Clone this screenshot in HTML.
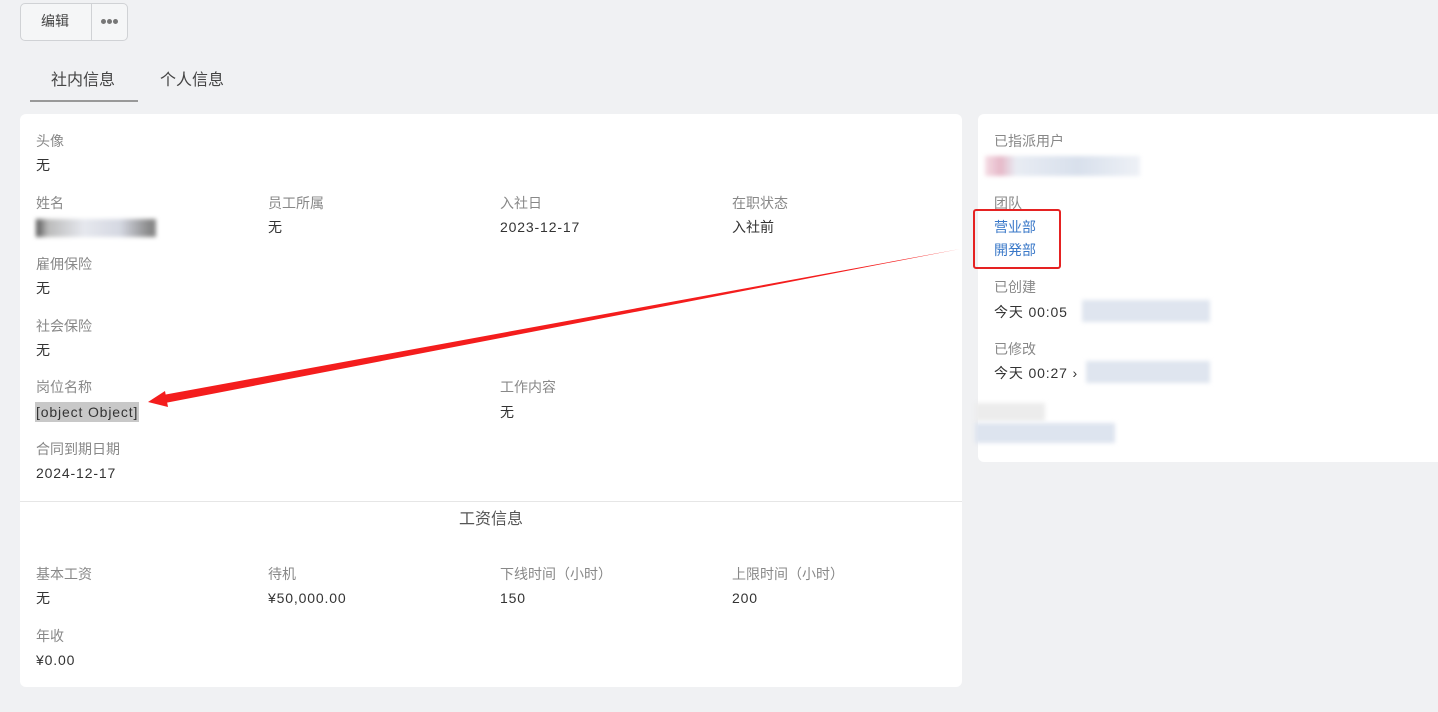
<!DOCTYPE html>
<html><head><meta charset="utf-8"><style>
*{margin:0;padding:0;box-sizing:border-box}
body{width:1438px;height:712px;background:#f0f1f3;font-family:"Liberation Sans","Noto Sans CJK SC",sans-serif;font-size:14px;color:#333;position:relative;overflow:hidden}
.abs{position:absolute}
.lb{position:absolute;color:#888;font-size:14px;line-height:20px;white-space:nowrap}
.v{position:absolute;color:#333;font-size:14px;line-height:20px;white-space:nowrap}
.l{letter-spacing:.85px}
.card{position:absolute;background:#fff;border-radius:6px}
.blur{position:absolute;filter:blur(2px)}
.dot{position:absolute;width:5px;height:5px;border-radius:50%;background:#777;top:19px}
</style></head><body>
<div class="abs" style="left:20px;top:3px;width:108px;height:38px;border:1px solid #d0d2d5;border-radius:5px;background:#f5f6f7"></div>
<div class="abs" style="left:91px;top:4px;width:1px;height:36px;background:#d0d2d5"></div>
<div class="v" style="left:41px;top:11px;color:#444">编辑</div>
<div class="dot" style="left:101px"></div><div class="dot" style="left:107px"></div><div class="dot" style="left:113px"></div>
<div class="v" style="left:51px;top:70px;font-size:16px;line-height:22px;color:#444">社内信息</div>
<div class="v" style="left:160px;top:70px;font-size:16px;line-height:22px;color:#444">个人信息</div>
<div class="abs" style="left:30px;top:100px;width:108px;height:2px;background:#999"></div>

<div class="card" style="left:20px;top:114px;width:942px;height:573px"></div>
<div class="lb" style="left:36px;top:131px">头像</div><div class="v" style="left:36px;top:155px">无</div>
<div class="lb" style="left:36px;top:193px">姓名</div>
<div class="blur" style="left:36px;top:219px;width:120px;height:18px;background:linear-gradient(90deg,#555 0,#bbb 10%,#e6e8ee 40%,#d5d8e2 70%,#888 95%)"></div>
<div class="lb" style="left:268px;top:193px">员工所属</div><div class="v" style="left:268px;top:217px">无</div>
<div class="lb" style="left:500px;top:193px">入社日</div><div class="v l" style="left:500px;top:217px">2023-12-17</div>
<div class="lb" style="left:732px;top:193px">在职状态</div><div class="v" style="left:732px;top:217px">入社前</div>
<div class="lb" style="left:36px;top:254px">雇佣保险</div><div class="v" style="left:36px;top:278px">无</div>
<div class="lb" style="left:36px;top:316px">社会保险</div><div class="v" style="left:36px;top:340px">无</div>
<div class="lb" style="left:36px;top:377px">岗位名称</div><div class="v l" style="left:35px;top:402px;background:#c8c8c8;padding:0 1px">[object Object]</div>
<div class="lb" style="left:500px;top:377px">工作内容</div><div class="v" style="left:500px;top:402px">无</div>
<div class="lb" style="left:36px;top:439px">合同到期日期</div><div class="v l" style="left:36px;top:463px">2024-12-17</div>
<div class="abs" style="left:20px;top:501px;width:942px;height:1px;background:#e6e6e6"></div>
<div class="v" style="left:459px;top:509px;font-size:16px;line-height:22px;color:#555">工资信息</div>
<div class="lb" style="left:36px;top:564px">基本工资</div><div class="v" style="left:36px;top:588px">无</div>
<div class="lb" style="left:268px;top:564px">待机</div><div class="v l" style="left:268px;top:588px">¥50,000.00</div>
<div class="lb" style="left:500px;top:564px">下线时间（小时）</div><div class="v l" style="left:500px;top:588px">150</div>
<div class="lb" style="left:732px;top:564px">上限时间（小时）</div><div class="v l" style="left:732px;top:588px">200</div>
<div class="lb" style="left:36px;top:626px">年收</div><div class="v l" style="left:36px;top:650px">¥0.00</div>

<div class="card" style="left:978px;top:114px;width:470px;height:348px"></div>
<div class="lb" style="left:994px;top:131px">已指派用户</div>
<div class="blur" style="left:985px;top:156px;width:155px;height:20px;background:linear-gradient(90deg,#f5dde5 0,#e6b8c8 10%,#e8ecf3 20%,#d8e0ec 60%,#eef1f6 100%)"></div>
<div class="lb" style="left:994px;top:193px">团队</div>
<div class="v" style="left:994px;top:217px;color:#3a78c8">营业部</div>
<div class="v" style="left:994px;top:240px;color:#3a78c8">開発部</div>
<div class="abs" style="left:973px;top:209px;width:88px;height:60px;border:2px solid #e52222;border-radius:3px"></div>
<div class="lb" style="left:994px;top:277px">已创建</div>
<div class="v l" style="left:994px;top:302px">今天 00:05</div>
<div class="blur" style="left:1082px;top:300px;width:128px;height:22px;background:#dfe5ef"></div>
<div class="lb" style="left:994px;top:339px">已修改</div>
<div class="v l" style="left:994px;top:363px">今天 00:27 ›</div>
<div class="blur" style="left:1086px;top:361px;width:124px;height:22px;background:#dfe5ef"></div>
<div class="blur" style="left:975px;top:403px;width:70px;height:18px;background:#ececec"></div>
<div class="blur" style="left:975px;top:423px;width:140px;height:20px;background:#dde4ef"></div>

<svg class="abs" style="left:0;top:0" width="1438" height="712">
<polygon points="960,249 163,395 165,403" fill="#f41d1d"/>
<polygon points="148,402 165,391 168,407" fill="#f41d1d"/>
</svg>
</body></html>
